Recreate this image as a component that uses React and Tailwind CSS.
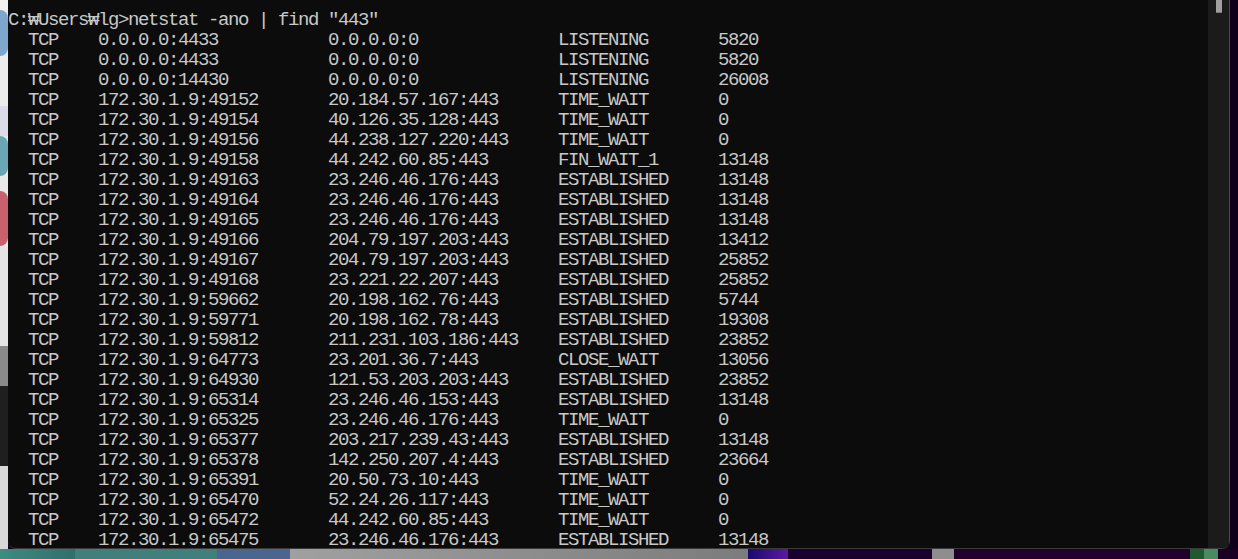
import React from "react";

const rows = [
  ["0.0.0.0:4433", "0.0.0.0:0", "LISTENING", "5820"],
  ["0.0.0.0:4433", "0.0.0.0:0", "LISTENING", "5820"],
  ["0.0.0.0:14430", "0.0.0.0:0", "LISTENING", "26008"],
  ["172.30.1.9:49152", "20.184.57.167:443", "TIME_WAIT", "0"],
  ["172.30.1.9:49154", "40.126.35.128:443", "TIME_WAIT", "0"],
  ["172.30.1.9:49156", "44.238.127.220:443", "TIME_WAIT", "0"],
  ["172.30.1.9:49158", "44.242.60.85:443", "FIN_WAIT_1", "13148"],
  ["172.30.1.9:49163", "23.246.46.176:443", "ESTABLISHED", "13148"],
  ["172.30.1.9:49164", "23.246.46.176:443", "ESTABLISHED", "13148"],
  ["172.30.1.9:49165", "23.246.46.176:443", "ESTABLISHED", "13148"],
  ["172.30.1.9:49166", "204.79.197.203:443", "ESTABLISHED", "13412"],
  ["172.30.1.9:49167", "204.79.197.203:443", "ESTABLISHED", "25852"],
  ["172.30.1.9:49168", "23.221.22.207:443", "ESTABLISHED", "25852"],
  ["172.30.1.9:59662", "20.198.162.76:443", "ESTABLISHED", "5744"],
  ["172.30.1.9:59771", "20.198.162.78:443", "ESTABLISHED", "19308"],
  ["172.30.1.9:59812", "211.231.103.186:443", "ESTABLISHED", "23852"],
  ["172.30.1.9:64773", "23.201.36.7:443", "CLOSE_WAIT", "13056"],
  ["172.30.1.9:64930", "121.53.203.203:443", "ESTABLISHED", "23852"],
  ["172.30.1.9:65314", "23.246.46.153:443", "ESTABLISHED", "13148"],
  ["172.30.1.9:65325", "23.246.46.176:443", "TIME_WAIT", "0"],
  ["172.30.1.9:65377", "203.217.239.43:443", "ESTABLISHED", "13148"],
  ["172.30.1.9:65378", "142.250.207.4:443", "ESTABLISHED", "23664"],
  ["172.30.1.9:65391", "20.50.73.10:443", "TIME_WAIT", "0"],
  ["172.30.1.9:65470", "52.24.26.117:443", "TIME_WAIT", "0"],
  ["172.30.1.9:65472", "44.242.60.85:443", "TIME_WAIT", "0"],
  ["172.30.1.9:65475", "23.246.46.176:443", "ESTABLISHED", "13148"],
];

export default function App() {
  return (
    <div className="w-[1238px] h-[559px] overflow-hidden flex flex-col bg-[#12001c]">
      <div className="flex h-[549px]">
        {/* left desktop strip */}
        <div className="w-[8px] flex flex-col bg-[#e9e9e9]">
          <div className="h-[10px] bg-[#f2f2f2]" />
          <div className="h-[46px] bg-[#7fa6cc] rounded-r-full" />
          <div className="h-[50px] bg-[#ececec]" />
          <div className="h-[30px] bg-[#dcdce8]" />
          <div className="h-[40px] bg-[#6aa6b4] rounded-r-full" />
          <div className="h-[15px] bg-[#e9e9e9]" />
          <div className="h-[55px] bg-[#c9606e] rounded-r-full" />
          <div className="h-[100px] bg-[#e4e4e4]" />
          <div className="h-[40px] bg-[#8a8a8a]" />
          <div className="h-[80px] bg-[#1f1f1f]" />
          <div className="flex-1 bg-[#d8d8d8]" />
        </div>
        {/* terminal window */}
        <div className="flex-1 flex bg-[#0c0c0c] rounded-bl-[8px] rounded-br-[8px] border-b border-[#3a3a3a] overflow-hidden">
          <div
            className="flex-1 pt-[10px] text-[#c8c8c8] text-[19px] leading-[20px] tracking-[-1.4px] whitespace-pre"
            style={{ fontFamily: '"Liberation Mono", "DejaVu Sans Mono", monospace' }}
          >
            <div>C:₩Users₩lg&gt;netstat -ano | find "443"</div>
            {rows.map((r, i) => (
              <div key={i} className="grid grid-cols-[20px_70px_230px_230px_160px_1fr]">
                <span />
                <span>TCP</span>
                <span>{r[0]}</span>
                <span>{r[1]}</span>
                <span>{r[2]}</span>
                <span>{r[3]}</span>
              </div>
            ))}
          </div>
          {/* scrollbar */}
          <div className="w-[21px] bg-[#1b1b1b] flex justify-center">
            <div className="w-[6px] h-[13px] bg-[#a0a0a0] border-b border-[#7a7a7a]" />
          </div>
          <div className="w-[1px] bg-[#4a4a4a]" />
        </div>
        <div className="w-[8px] bg-[#10001a]" />
      </div>
      {/* bottom desktop strip */}
      <div className="h-[10px] flex">
        <div className="w-[75px] bg-gradient-to-r from-[#3e8c80] to-[#2f6f6c]" />
        <div className="w-[142px] bg-[#3f7f7c]" />
        <div className="w-[73px] bg-[#4a6590]" />
        <div className="w-[458px] bg-gradient-to-r from-[#a0a0a0] to-[#7c7c7c]" />
        <div className="w-[40px] bg-gradient-to-r from-[#1a0a70] to-[#5a18a0]" />
        <div className="w-[144px] bg-[#1a0030]" />
        <div className="w-[22px] bg-[#8e8e8e]" />
        <div className="w-[236px] bg-[#22002e]" />
        <div className="w-[14px] bg-[#1e5a30]" />
        <div className="w-[14px] bg-[#4a8a60]" />
        <div className="flex-1 bg-[#1a0024]" />
      </div>
    </div>
  );
}
